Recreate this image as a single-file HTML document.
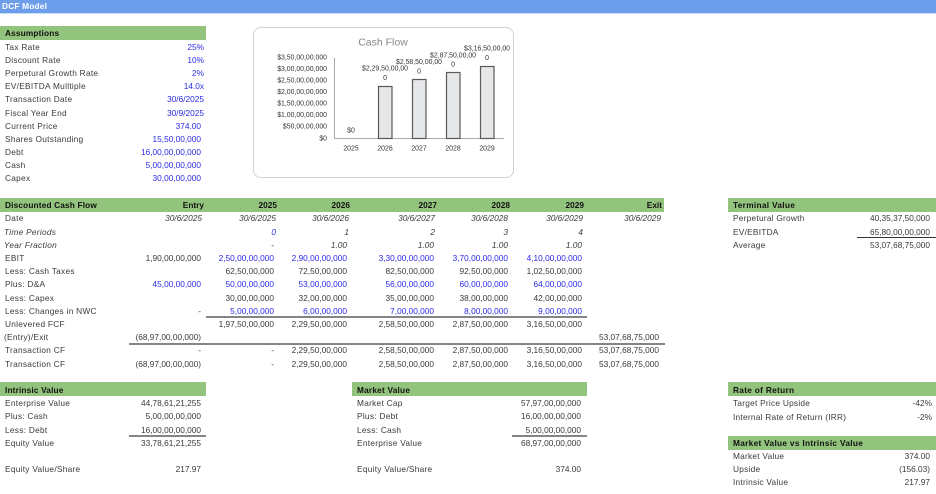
<!DOCTYPE html>
<html><head><meta charset="utf-8"><title>DCF Model</title>
<style>
html,body{margin:0;padding:0;background:#fff}
#p{position:relative;width:936px;height:494px;overflow:hidden;background:#fff;font:8.3px/13px "Liberation Sans",sans-serif;color:#3a3a3a;filter:blur(.35px)}
.b{position:absolute;background:#93c47d;height:13.5px}
.l{position:absolute;background:#858585;height:2px}
.w{position:absolute;left:0;width:936px;height:13px}
.w span{position:absolute;white-space:nowrap;top:0}
.u{color:#2a2ae8}.i{font-style:italic}.h{font-weight:bold;color:#111}
.a{left:5px;letter-spacing:.28px}.m{left:357px;letter-spacing:.28px}.t{left:733px;letter-spacing:.25px}
.a.h{letter-spacing:.15px}.m.h{letter-spacing:.2px}.t.h{letter-spacing:.3px}
.c0{right:735px}.c0h{right:732px}.c1{right:662px}.c2{right:589px}.c3{right:502px}.c4{right:428px}.c5{right:354px}.c6{right:277px}.tv{right:6px}.mv{right:355px}.rr{right:4px}.rn{right:6px}
svg{position:absolute;left:0;top:0}
svg text{font-family:"Liberation Sans",sans-serif;fill:#333}
</style></head><body><div id="p">
<div style="position:absolute;left:0;top:0;width:936px;height:13px;background:#6d9eeb;border-bottom:1px solid #c9dcf8"></div>
<div class="w" style="top:0"><span style="left:2px;color:#fff;font-weight:bold;letter-spacing:.2px">DCF Model</span></div>

<div class="b" style="left:0;top:26px;width:206px"></div>
<div class="w" style="top:27px"><span class="a h">Assumptions</span></div>
<div class="w" style="top:41px"><span class="a">Tax Rate</span><span class="c0h u">25%</span></div>
<div class="w" style="top:54px"><span class="a">Discount Rate</span><span class="c0h u">10%</span></div>
<div class="w" style="top:67px"><span class="a">Perpetural Growth Rate</span><span class="c0h u">2%</span></div>
<div class="w" style="top:80px"><span class="a">EV/EBITDA Mulltiple</span><span class="c0h u">14.0x</span></div>
<div class="w" style="top:93px"><span class="a">Transaction Date</span><span class="c0h u">30/6/2025</span></div>
<div class="w" style="top:107px"><span class="a">Fiscal Year End</span><span class="c0h u">30/9/2025</span></div>
<div class="w" style="top:120px"><span class="a">Current Price</span><span class="c0 u">374.00</span></div>
<div class="w" style="top:133px"><span class="a">Shares Outstanding</span><span class="c0 u">15,50,00,000</span></div>
<div class="w" style="top:146px"><span class="a">Debt</span><span class="c0 u">16,00,00,00,000</span></div>
<div class="w" style="top:159px"><span class="a">Cash</span><span class="c0 u">5,00,00,00,000</span></div>
<div class="w" style="top:172px"><span class="a">Capex</span><span class="c0 u">30,00,00,000</span></div>

<div style="position:absolute;left:253px;top:27px;width:259px;height:149px;border:1px solid #d2d2d2;border-radius:8px"></div>
<svg width="936" height="494" viewBox="0 0 936 494">
<text x="383" y="45.5" font-size="10.5" text-anchor="middle" style="fill:#888">Cash Flow</text>
<g font-size="6.9" text-anchor="end">
<text x="327" y="59.3">$3,50,00,00,000</text>
<text x="327" y="71">$3,00,00,00,000</text>
<text x="327" y="82.5">$2,50,00,00,000</text>
<text x="327" y="94">$2,00,00,00,000</text>
<text x="327" y="105.5">$1,50,00,00,000</text>
<text x="327" y="117">$1,00,00,00,000</text>
<text x="327" y="128.5">$50,00,00,000</text>
<text x="327" y="140.3">$0</text>
</g>
<path d="M334.5 58V138.5H504" fill="none" stroke="#aaa" stroke-width="1"/>
<g fill="#e6e7e8" stroke="#5a5a5a" stroke-width="1.2">
<rect x="378.5" y="86.5" width="13.5" height="52"/>
<rect x="412.5" y="79.5" width="13.5" height="59"/>
<rect x="446.5" y="72.5" width="13.5" height="66"/>
<rect x="480.5" y="66.5" width="13.5" height="72"/>
</g>
<g font-size="6.9" text-anchor="middle">
<text x="351" y="150.6">2025</text><text x="385" y="150.6">2026</text><text x="419" y="150.6">2027</text><text x="453" y="150.6">2028</text><text x="487" y="150.6">2029</text>
<text x="351" y="132.3">$0</text>
<text x="385" y="70.6">$2,29,50,00,00</text><text x="385" y="80">0</text>
<text x="419" y="64">$2,58,50,00,00</text><text x="419" y="73.3">0</text>
<text x="453" y="57.3">$2,87,50,00,00</text><text x="453" y="66.6">0</text>
<text x="487" y="50.6">$3,16,50,00,00</text><text x="487" y="60">0</text>
</g>
</svg>

<div class="b" style="left:0;top:198px;width:664px"></div>
<div class="w" style="top:199px"><span class="a h">Discounted Cash Flow</span><span class="c0h h">Entry</span><span class="h" style="right:659px">2025</span><span class="h" style="right:586px">2026</span><span class="h" style="right:499px">2027</span><span class="h" style="right:426px">2028</span><span class="h" style="right:352px">2029</span><span class="h" style="right:274px">Exit</span></div>
<div class="w" style="top:212px"><span class="a">Date</span><span class="i" style="right:734px">30/6/2025</span><span class="i" style="right:660px">30/6/2025</span><span class="i" style="right:587px">30/6/2026</span><span class="i" style="right:501px">30/6/2027</span><span class="i" style="right:428px">30/6/2028</span><span class="i" style="right:353px">30/6/2029</span><span class="i" style="right:275px">30/6/2029</span></div>
<div class="w" style="top:226px"><span class="a i" style="left:4px">Time Periods</span><span class="i u" style="right:660px">0</span><span class="i" style="right:587px">1</span><span class="i" style="right:501px">2</span><span class="i" style="right:428px">3</span><span class="i" style="right:353px">4</span></div>
<div class="w" style="top:239px"><span class="a i" style="left:4px">Year Fraction</span><span class="c1">-</span><span class="i c2">1.00</span><span class="i c3">1.00</span><span class="i c4">1.00</span><span class="i c5">1.00</span></div>
<div class="w" style="top:252px"><span class="a">EBIT</span><span class="c0">1,90,00,00,000</span><span class="c1 u">2,50,00,00,000</span><span class="c2 u">2,90,00,00,000</span><span class="c3 u">3,30,00,00,000</span><span class="c4 u">3,70,00,00,000</span><span class="c5 u">4,10,00,00,000</span></div>
<div class="w" style="top:265px"><span class="a">Less: Cash Taxes</span><span class="c1">62,50,00,000</span><span class="c2">72,50,00,000</span><span class="c3">82,50,00,000</span><span class="c4">92,50,00,000</span><span class="c5">1,02,50,00,000</span></div>
<div class="w" style="top:278px"><span class="a">Plus: D&amp;A</span><span class="c0 u">45,00,00,000</span><span class="c1 u">50,00,00,000</span><span class="c2 u">53,00,00,000</span><span class="c3 u">56,00,00,000</span><span class="c4 u">60,00,00,000</span><span class="c5 u">64,00,00,000</span></div>
<div class="w" style="top:292px"><span class="a">Less: Capex</span><span class="c1">30,00,00,000</span><span class="c2">32,00,00,000</span><span class="c3">35,00,00,000</span><span class="c4">38,00,00,000</span><span class="c5">42,00,00,000</span></div>
<div class="w" style="top:305px"><span class="a">Less: Changes in NWC</span><span class="c0">-</span><span class="c1 u">5,00,00,000</span><span class="c2 u">6,00,00,000</span><span class="c3 u">7,00,00,000</span><span class="c4 u">8,00,00,000</span><span class="c5 u">9,00,00,000</span></div>
<div class="l" style="left:206px;top:316px;width:381px"></div>
<div class="w" style="top:318px"><span class="a">Unlevered FCF</span><span class="c1">1,97,50,00,000</span><span class="c2">2,29,50,00,000</span><span class="c3">2,58,50,00,000</span><span class="c4">2,87,50,00,000</span><span class="c5">3,16,50,00,000</span></div>
<div class="w" style="top:331px"><span class="a" style="left:4px">(Entry)/Exit</span><span class="c0">(68,97,00,00,000)</span><span class="c6">53,07,68,75,000</span></div>
<div class="l" style="left:129px;top:343px;width:536px"></div>
<div class="w" style="top:344px"><span class="a">Transaction CF</span><span class="c0">-</span><span class="c1">-</span><span class="c2">2,29,50,00,000</span><span class="c3">2,58,50,00,000</span><span class="c4">2,87,50,00,000</span><span class="c5">3,16,50,00,000</span><span class="c6">53,07,68,75,000</span></div>
<div class="w" style="top:358px"><span class="a">Transaction CF</span><span class="c0">(68,97,00,00,000)</span><span class="c1">-</span><span class="c2">2,29,50,00,000</span><span class="c3">2,58,50,00,000</span><span class="c4">2,87,50,00,000</span><span class="c5">3,16,50,00,000</span><span class="c6">53,07,68,75,000</span></div>

<div class="b" style="left:728px;top:198px;width:208px"></div>
<div class="w" style="top:199px"><span class="t h">Terminal Value</span></div>
<div class="w" style="top:212px"><span class="t">Perpetural Growth</span><span class="tv">40,35,37,50,000</span></div>
<div class="w" style="top:226px"><span class="t">EV/EBITDA</span><span class="tv">65,80,00,00,000</span></div>
<div class="l" style="left:857px;top:237px;width:79px;background:#333;height:1px"></div>
<div class="w" style="top:239px"><span class="t">Average</span><span class="tv">53,07,68,75,000</span></div>

<div class="b" style="left:0;top:382px;width:206px"></div>
<div class="w" style="top:384px"><span class="a h">Intrinsic Value</span></div>
<div class="w" style="top:397px"><span class="a">Enterprise Value</span><span class="c0">44,78,61,21,255</span></div>
<div class="w" style="top:410px"><span class="a">Plus: Cash</span><span class="c0">5,00,00,00,000</span></div>
<div class="w" style="top:424px"><span class="a">Less: Debt</span><span class="c0">16,00,00,00,000</span></div>
<div class="l" style="left:129px;top:435px;width:77px"></div>
<div class="w" style="top:437px"><span class="a">Equity Value</span><span class="c0">33,78,61,21,255</span></div>
<div class="w" style="top:463px"><span class="a">Equity Value/Share</span><span class="c0">217.97</span></div>

<div class="b" style="left:352px;top:382px;width:235px"></div>
<div class="w" style="top:384px"><span class="m h">Market Value</span></div>
<div class="w" style="top:397px"><span class="m">Market Cap</span><span class="mv">57,97,00,00,000</span></div>
<div class="w" style="top:410px"><span class="m">Plus: Debt</span><span class="mv">16,00,00,00,000</span></div>
<div class="w" style="top:424px"><span class="m">Less: Cash</span><span class="mv">5,00,00,00,000</span></div>
<div class="l" style="left:512px;top:435px;width:75px"></div>
<div class="w" style="top:437px"><span class="m">Enterprise Value</span><span class="mv">68,97,00,00,000</span></div>
<div class="w" style="top:463px"><span class="m">Equity Value/Share</span><span class="mv">374.00</span></div>

<div class="b" style="left:728px;top:382px;width:208px"></div>
<div class="w" style="top:384px"><span class="t h">Rate of Return</span></div>
<div class="w" style="top:397px"><span class="t">Target Price Upside</span><span class="rr">-42%</span></div>
<div class="w" style="top:411px"><span class="t">Internal Rate of Return (IRR)</span><span class="rr">-2%</span></div>
<div class="b" style="left:728px;top:436px;width:208px"></div>
<div class="w" style="top:437px"><span class="t h">Market Value vs Intrinsic Value</span></div>
<div class="w" style="top:450px"><span class="t">Market Value</span><span class="rn">374.00</span></div>
<div class="w" style="top:463px"><span class="t">Upside</span><span class="rn">(156.03)</span></div>
<div class="w" style="top:476px"><span class="t">Intrinsic Value</span><span class="rn">217.97</span></div>
</div></body></html>
